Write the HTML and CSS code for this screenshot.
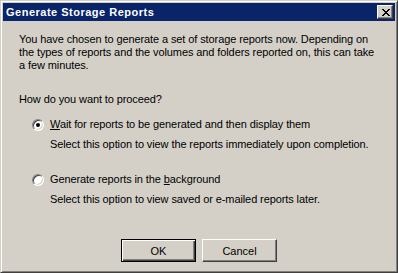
FILE: index.html
```html
<!DOCTYPE html>
<html lang="en">
<head>
    <meta charset="UTF-8">
    <title>Generate Storage Reports</title>
    <link rel="stylesheet" href="styles.css">
</head>
<body>
    <div class="window">
        <div class="titlebar">
            <span class="title">Generate Storage Reports</span>
            <button class="close-btn" aria-label="Close">
                <svg width="8" height="7" viewBox="0 0 8 7" shape-rendering="crispEdges">
                    <path d="M0 0h2v1H0zM6 0h2v1H6zM1 1h2v1H1zM5 1h2v1H5zM2 2h4v1H2zM3 3h2v1H3zM2 4h4v1H2zM1 5h2v1H1zM5 5h2v1H5zM0 6h2v1H0zM6 6h2v1H6z" fill="#000"/>
                </svg>
            </button>
        </div>

        <div class="content">
            <p class="intro">You have chosen to generate a set of storage reports now. Depending on the types of reports and the volumes and folders reported on, this can take a few minutes.</p>

            <p class="question">How do you want to proceed?</p>

            <div class="option">
                <span class="radio checked"></span>
                <div class="option-text">
                    <div class="label"><u>W</u>ait for reports to be generated and then display them</div>
                    <div class="desc">Select this option to view the reports immediately upon completion.</div>
                </div>
            </div>

            <div class="option">
                <span class="radio"></span>
                <div class="option-text">
                    <div class="label">Generate reports in the <u>b</u>ackground</div>
                    <div class="desc">Select this option to view saved or e-mailed reports later.</div>
                </div>
            </div>

            <div class="buttons">
                <button class="btn default">OK</button>
                <button class="btn">Cancel</button>
            </div>
        </div>
    </div>
</body>
</html>
```

FILE: styles.css
```css
* {
    margin: 0;
    padding: 0;
    box-sizing: border-box;
}

body {
    font-family: 'Liberation Sans', Arial, sans-serif;
    font-size: 11px;
    color: #000;
    background: #d4d0c8;
}

/* classic 3d window frame */
.window {
    width: 398px;
    height: 273px;
    background: #d4d0c8;
    padding: 2px;
    border-top: 1px solid #d4d0c8;
    border-left: 1px solid #d4d0c8;
    border-right: 1px solid #404040;
    border-bottom: 1px solid #404040;
    box-shadow: inset 1px 1px 0 #fff, inset -1px -1px 0 #808080;
    display: flex;
    flex-direction: column;
}

.titlebar {
    height: 18px;
    background: #0a246a;
    display: flex;
    align-items: center;
    justify-content: space-between;
    padding: 0 2px 0 3px;
}

.title {
    color: #fff;
    font-weight: bold;
    font-size: 11px;
    letter-spacing: 0.5px;
}

.close-btn {
    width: 16px;
    height: 14px;
    background: #d4d0c8;
    border-top: 1px solid #fff;
    border-left: 1px solid #fff;
    border-right: 1px solid #404040;
    border-bottom: 1px solid #404040;
    box-shadow: inset -1px -1px 0 #808080;
    display: flex;
    align-items: center;
    justify-content: center;
    padding-left: 1px;
}

.content {
    padding: 12px 16px 0 16px;
    line-height: 13px;
    letter-spacing: -0.1px;
    flex: 1;
    display: flex;
    flex-direction: column;
}

.intro {
    width: 358px;
    margin-bottom: 21px;
}

.question {
    margin-bottom: 12px;
}

.option {
    display: flex;
    align-items: flex-start;
    margin-left: 13px;
    margin-bottom: 22px;
}

.option-text .label {
    margin-bottom: 7px;
}

.radio {
    width: 12px;
    height: 12px;
    border-radius: 50%;
    background: #fff;
    border: 1px solid;
    border-color: #808080 #fff #fff #808080;
    box-shadow: inset 1px 1px 0 #404040, inset -1px -1px 0 #d4d0c8;
    margin: 1px 6px 0 0;
    position: relative;
    flex-shrink: 0;
}

.radio.checked::after {
    content: '';
    position: absolute;
    left: 3px;
    top: 3px;
    width: 4px;
    height: 4px;
    border-radius: 50%;
    background: #000;
}

.buttons {
    display: flex;
    justify-content: center;
    gap: 6px;
    margin-top: auto;
    margin-bottom: 8px;
    letter-spacing: 0;
}

.btn {
    width: 75px;
    height: 23px;
    font-family: inherit;
    font-size: 11px;
    color: #000;
    background: #d4d0c8;
    border-top: 1px solid #fff;
    border-left: 1px solid #fff;
    border-right: 1px solid #404040;
    border-bottom: 1px solid #404040;
    box-shadow: inset -1px -1px 0 #808080;
}

.btn.default {
    border: 1px solid #000;
    box-shadow: inset 1px 1px 0 #fff, inset -1px -1px 0 #404040, inset -2px -2px 0 #808080;
}
```
